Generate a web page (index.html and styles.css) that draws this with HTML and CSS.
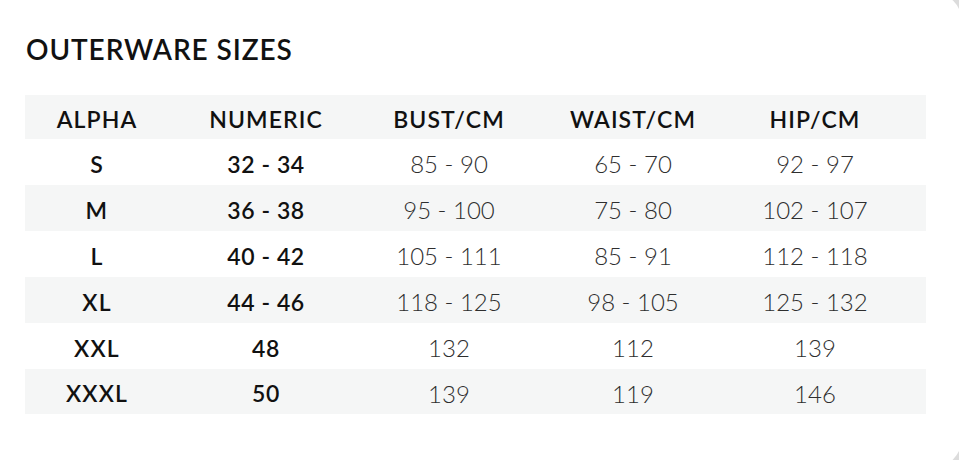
FILE: index.html
```html
<!DOCTYPE html>
<html lang="en">
<head>
<meta charset="utf-8">
<title>Outerware Sizes</title>
<link rel="stylesheet" href="styles.css">
</head>
<body>
<div class="card">
  <h1 class="title">OUTERWARE SIZES</h1>
  <div class="table">
    <div class="row head">
      <div>ALPHA</div><div>NUMERIC</div><div>BUST/CM</div><div>WAIST/CM</div><div>HIP/CM</div>
    </div>
    <div class="row">
      <div class="alpha">S</div><div class="num">32 - 34</div><div>85 - 90</div><div>65 - 70</div><div>92 - 97</div>
    </div>
    <div class="row shade">
      <div class="alpha">M</div><div class="num">36 - 38</div><div>95 - 100</div><div>75 - 80</div><div>102 - 107</div>
    </div>
    <div class="row">
      <div class="alpha">L</div><div class="num">40 - 42</div><div>105 - 111</div><div>85 - 91</div><div>112 - 118</div>
    </div>
    <div class="row shade">
      <div class="alpha">XL</div><div class="num">44 - 46</div><div>118 - 125</div><div>98 - 105</div><div>125 - 132</div>
    </div>
    <div class="row">
      <div class="alpha">XXL</div><div class="num">48</div><div>132</div><div>112</div><div>139</div>
    </div>
    <div class="row shade last">
      <div class="alpha">XXXL</div><div class="num">50</div><div>139</div><div>119</div><div>146</div>
    </div>
  </div>
</div>
</body>
</html>
```
FILE: styles.css
```css
html, body {
  margin: 0;
  padding: 0;
  overflow: hidden;
}
html {
  background: #dcdcdc;
}
body {
  width: 959px;
  height: 460px;
  font-family: Lato, "Open Sans", sans-serif;
  color: #141414;
}
.card {
  margin: -8px 0 0 -30px;
  width: 992px;
  height: 476px;
  box-sizing: border-box;
  background: #fff;
  border-radius: 0 30px 30px 0;
  padding: 0 0 0 55px;
}
.title {
  margin: 0;
  padding-top: 40px;
  margin-left: 1px;
  font-size: 28px;
  line-height: 34px;
  font-weight: 600;
  letter-spacing: 0.9px;
  color: #111;
}
.table {
  margin-top: 29px;
  width: 901px;
}
.row {
  display: grid;
  grid-template-columns: 144px 194px 172px 196px 168px;
  padding-right: 27px;
  height: 46px;
  align-items: center;
  text-align: center;
  font-size: 24px;
  font-weight: 300;
  color: #2e2e2e;
}
.row > div {
  padding-top: 3px;
}
.row.head {
  height: 44px;
  background: #f5f6f6;
  font-size: 23px;
  font-weight: 600;
  color: #111;
  letter-spacing: 1.1px;
}
.row.shade {
  background: #f5f6f6;
}
.row.last {
  height: 45px;
}
.alpha, .num {
  font-weight: 600;
  color: #111;
  font-size: 23px;
}
.num {
  letter-spacing: 0.6px;
}
.alpha {
  letter-spacing: 1.2px;
}
```
